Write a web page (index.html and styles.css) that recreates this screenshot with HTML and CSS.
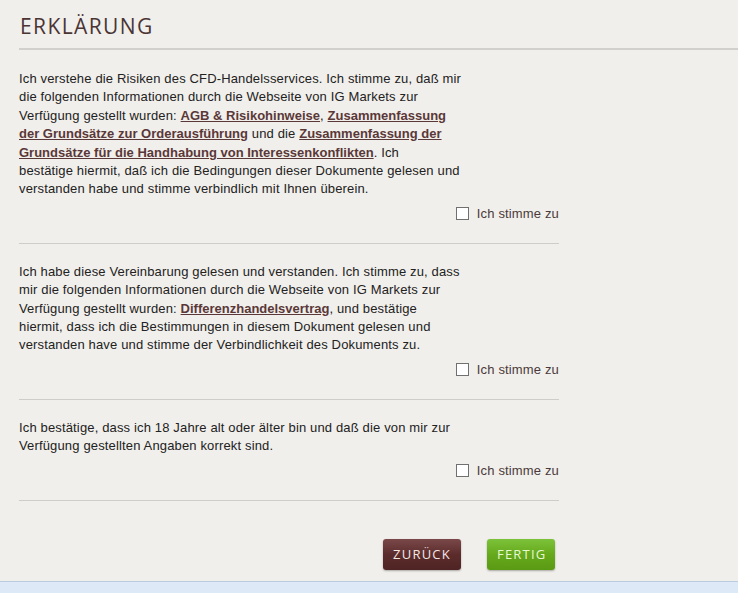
FILE: index.html
```html
<!DOCTYPE html>
<html lang="de">
<head>
  <meta charset="UTF-8">
  <title>Erklärung</title>
  <link rel="stylesheet" href="styles.css">
</head>
<body>
<main class="page">

  <h1 class="page-title">Erklärung</h1>

  <div class="declarations">

    <div class="declaration">
      <p class="declaration-text">
        Ich verstehe die Risiken des CFD-Handelsservices. Ich stimme zu, daß mir<br>
        die folgenden Informationen durch die Webseite von IG Markets zur<br>
        Verfügung gestellt wurden: <a href="#">AGB &amp; Risikohinweise</a>, <a href="#">Zusammenfassung<br>
        der Grundsätze zur Orderausführung</a> und die <a href="#">Zusammenfassung der<br>
        Grundsätze für die Handhabung von Interessenkonflikten</a>. Ich<br>
        bestätige hiermit, daß ich die Bedingungen dieser Dokumente gelesen und<br>
        verstanden habe und stimme verbindlich mit Ihnen überein.
      </p>
      <label class="agree"><input type="checkbox"> Ich stimme zu</label>
    </div>

    <div class="declaration">
      <p class="declaration-text">
        Ich habe diese Vereinbarung gelesen und verstanden. Ich stimme zu, dass<br>
        mir die folgenden Informationen durch die Webseite von IG Markets zur<br>
        Verfügung gestellt wurden: <a href="#">Differenzhandelsvertrag</a>, und bestätige<br>
        hiermit, dass ich die Bestimmungen in diesem Dokument gelesen und<br>
        verstanden have und stimme der Verbindlichkeit des Dokuments zu.
      </p>
      <label class="agree"><input type="checkbox"> Ich stimme zu</label>
    </div>

    <div class="declaration">
      <p class="declaration-text">
        Ich bestätige, dass ich 18 Jahre alt oder älter bin und daß die von mir zur<br>
        Verfügung gestellten Angaben korrekt sind.
      </p>
      <label class="agree"><input type="checkbox"> Ich stimme zu</label>
    </div>

    <div class="actions">
      <button type="button" class="btn btn-back">Zurück</button>
      <button type="button" class="btn btn-done">Fertig</button>
    </div>

  </div>

</main>

<div class="footer-strip"></div>
</body>
</html>
```

FILE: styles.css
```css
body {
  margin: 0;
  background-color: #f1efeb;
  font-family: "Liberation Sans", Arial, sans-serif;
  color: #222;
}

.page {
  height: 581px;
  padding-left: 19px;
  box-sizing: border-box;
}

.page-title {
  margin: 0;
  padding: 14px 0 9px 1px;
  font-family: "Open Sans", sans-serif;
  font-size: 21px;
  font-weight: normal;
  letter-spacing: 1.4px;
  line-height: 25px;
  text-transform: uppercase;
  color: #4a3434;
  border-bottom: 2px solid #d2d0cc;
}

.declarations {
  width: 540px;
}

.declaration {
  padding: 19px 0 22px;
  border-bottom: 1px solid #cfcdc9;
}

.declaration:first-child {
  padding-top: 20px;
}

.declaration-text {
  margin: 0;
  white-space: nowrap;
  font-size: 13px;
  letter-spacing: 0.15px;
  line-height: 18.4px;
}

.declaration-text a {
  color: #5a3838;
  font-weight: bold;
  letter-spacing: 0;
}

.agree {
  display: flex;
  justify-content: flex-end;
  align-items: center;
  gap: 8px;
  height: 15px;
  margin-top: 7px;
  font-size: 13px;
  letter-spacing: 0.15px;
  color: #4a3a3a;
}

.agree input {
  appearance: none;
  width: 13px;
  height: 13px;
  margin: 0;
  border: 1px solid #707070;
  background: #fff;
}

.actions {
  display: flex;
  justify-content: flex-end;
  gap: 26px;
  padding: 38px 4px 0 0;
}

.btn {
  height: 31px;
  padding: 0 10px;
  border: none;
  border-radius: 3px;
  font-family: "Open Sans", sans-serif;
  font-size: 13px;
  letter-spacing: 1.2px;
  text-transform: uppercase;
  box-shadow: 0 1px 2px rgba(0, 0, 0, 0.3);
}

.btn-back {
  width: 78px;
  color: #f3e6e6;
  background: linear-gradient(#7a4848, #5c2c2c 50%, #4f2424);
}

.btn-done {
  width: 68px;
  color: #e6f8d0;
  background: linear-gradient(#7cc23a, #66a91c 50%, #5a9a14);
}

.footer-strip {
  height: 12px;
  background-color: #dde9f7;
  border-top: 1px solid #b9cce0;
}
```
